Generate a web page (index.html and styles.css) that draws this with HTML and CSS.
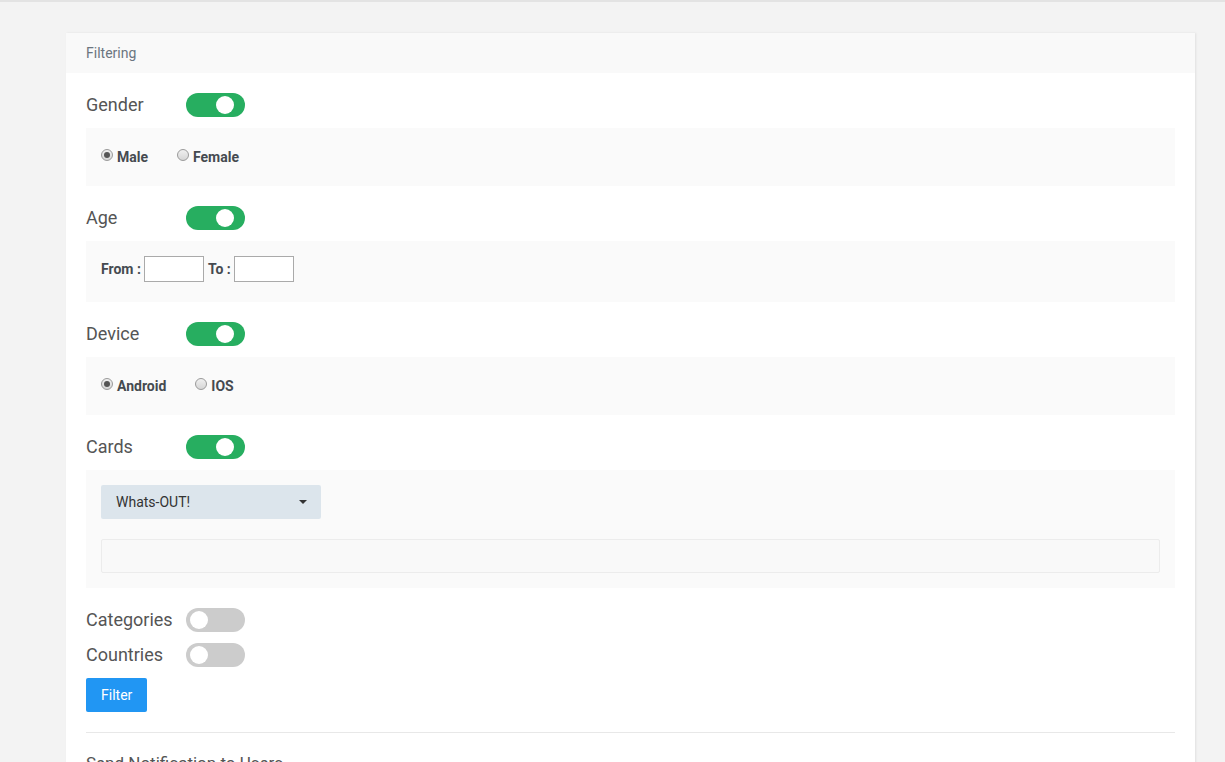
FILE: index.html
```html
<!DOCTYPE html>
<html lang="en">

<head>
    <meta charset="UTF-8" />
    <meta name="viewport" content="width=device-width, initial-scale=1.0" />
    <title>Filtering</title>
    <link rel="stylesheet" href="styles.css">
</head>

<body>
    <div class="card">
        <div class="card-header">Filtering</div>
        <div class="card-body">
            <div class="switch-row">
                <span class="switch-label">Gender</span>
                <span class="toggle on"><span class="knob"></span></span>
            </div>
            <div class="option-box radios">
                <label class="radio"><span class="dot checked"></span>Male</label>
                <label class="radio"><span class="dot"></span>Female</label>
            </div>

            <div class="switch-row">
                <span class="switch-label">Age</span>
                <span class="toggle on"><span class="knob"></span></span>
            </div>
            <div class="option-box range">
                <span class="range-label">From :</span>
                <input class="range-input" type="text">
                <span class="range-label">To :</span>
                <input class="range-input" type="text">
            </div>

            <div class="switch-row">
                <span class="switch-label">Device</span>
                <span class="toggle on"><span class="knob"></span></span>
            </div>
            <div class="option-box radios device">
                <label class="radio"><span class="dot checked"></span>Android</label>
                <label class="radio"><span class="dot"></span>IOS</label>
            </div>

            <div class="switch-row">
                <span class="switch-label">Cards</span>
                <span class="toggle on"><span class="knob"></span></span>
            </div>
            <div class="option-box cards">
                <div class="dropdown">
                    <span>Whats-OUT!</span>
                    <span class="caret"></span>
                </div>
                <div class="card-list"></div>
            </div>

            <div class="switch-row">
                <span class="switch-label">Categories</span>
                <span class="toggle"><span class="knob"></span></span>
            </div>
            <div class="switch-row">
                <span class="switch-label">Countries</span>
                <span class="toggle"><span class="knob"></span></span>
            </div>
            <button class="filter-btn">Filter</button>

            <hr class="divider">
            <div class="section-title">Send Notification to Users</div>
        </div>
    </div>
</body>

</html>
```

FILE: styles.css
```css
body {
    margin: 0;
    background-color: #f3f3f3;
    border-top: 2px solid #e3e3e3;
    font-family: Roboto, "Liberation Sans", sans-serif;
    overflow: hidden;
}

.card {
    margin: 31px 30px 0 66px;
    background-color: #fff;
    box-shadow: 1px 0 2px rgba(0, 0, 0, 0.08);
}

.card-header {
    height: 40px;
    line-height: 40px;
    padding: 0 20px;
    background-color: #f9f9f9;
    font-size: 14px;
    color: #6b7580;
}

.card-body {
    padding: 20px;
}

.switch-row {
    display: flex;
    align-items: center;
    height: 24px;
    margin-bottom: 11px;
}

.switch-label {
    width: 100px;
    margin-top: -2px;
    font-size: 18px;
    color: #555;
}

.toggle {
    position: relative;
    width: 59px;
    height: 24px;
    border-radius: 12px;
    background-color: #ccc;
}

.toggle.on {
    background-color: #27ae60;
}

.knob {
    position: absolute;
    top: 3px;
    left: 4px;
    width: 18px;
    height: 18px;
    border-radius: 50%;
    background-color: #fff;
}

.toggle.on .knob {
    left: 30px;
}

.option-box {
    background-color: #fafafa;
    padding: 15px;
    margin-bottom: 20px;
}

.radios {
    display: flex;
    align-items: center;
    height: 28px;
}

.radio {
    display: flex;
    align-items: center;
    margin-right: 29px;
    font-size: 14px;
    font-weight: bold;
    color: #454a50;
}

.dot {
    position: relative;
    top: -2px;
    width: 10px;
    height: 10px;
    margin-right: 4px;
    border: 1px solid #9a9a9a;
    border-radius: 50%;
    background: linear-gradient(#f0f0f0, #d6d6d6);
}

.dot.checked::after {
    content: "";
    position: absolute;
    top: 2px;
    left: 2px;
    width: 6px;
    height: 6px;
    border-radius: 50%;
    background-color: #555;
}

.range {
    display: flex;
    align-items: center;
    padding-bottom: 20px;
}

.range-label {
    font-size: 14px;
    font-weight: bold;
    color: #454a50;
    margin-right: 3px;
}

.range-input {
    box-sizing: border-box;
    width: 60px;
    height: 26px;
    margin: 0 4px 0 0;
    border: 1px solid #aaa;
    background-color: #fff;
    padding: 0 4px;
}

.dropdown {
    box-sizing: border-box;
    display: flex;
    align-items: center;
    justify-content: space-between;
    width: 220px;
    height: 34px;
    padding: 0 14px 0 15px;
    background-color: #dce5ec;
    border-radius: 2px;
    font-size: 14px;
    color: #333;
}

.caret {
    width: 0;
    height: 0;
    border-left: 4px solid transparent;
    border-right: 4px solid transparent;
    border-top: 4px solid #333;
}

.card-list {
    box-sizing: border-box;
    height: 34px;
    margin-top: 20px;
    border: 1px solid #ececec;
    border-radius: 2px;
    background-color: #f9f9f9;
}

.filter-btn {
    display: block;
    height: 34px;
    padding: 0 15px;
    border: none;
    border-radius: 2px;
    background-color: #2196f3;
    color: #fff;
    font-family: Roboto, "Liberation Sans", sans-serif;
    font-size: 14px;
}

.divider {
    margin: 20px 0;
    border: none;
    border-top: 1px solid #e8e8e8;
}

.section-title {
    font-size: 17px;
    color: #555;
    line-height: 20px;
}
```
